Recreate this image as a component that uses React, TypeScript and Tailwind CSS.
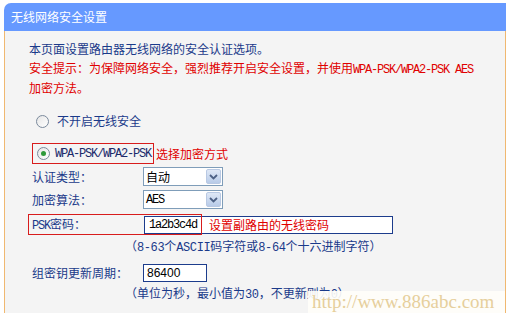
const cjk = "font-['Noto_Sans_CJK_SC','Noto_Sans',sans-serif]";
const mono = "font-['Liberation_Mono',monospace] tracking-[-1.2px]";
const hintMono = "font-['Liberation_Mono',monospace] tracking-[-0.4px]";

function Radio({ checked }: { checked?: boolean }) {
  return (
    <span className="flex h-[13px] w-[13px] items-center justify-center rounded-full border border-[#7b8a9c] bg-gradient-to-br from-[#e6e6e6] to-white">
      {checked && <span className="h-[5px] w-[5px] rounded-full bg-[#2f9a3a]" />}
    </span>
  );
}

function Select({ value, latin }: { value: string; latin?: boolean }) {
  return (
    <div className="flex h-[19px] w-[80px] items-stretch border border-[#7f9db9] bg-white">
      <span className={`flex flex-1 items-center pl-[2px] text-[12px] text-black ${latin ? mono : ""}`}>
        {value}
      </span>
      <span className="m-[1px] flex w-[15px] items-center justify-center rounded-[2px] border border-[#b9c9e3] bg-gradient-to-b from-[#dfe8f6] to-[#b8cbe8]">
        <svg width="9" height="6" viewBox="0 0 9 6">
          <path d="M1 1 L4.5 4.5 L8 1" fill="none" stroke="#4d6185" strokeWidth="1.8" />
        </svg>
      </span>
    </div>
  );
}

export default function App() {
  return (
    <div className={`relative h-[313px] w-[509px] overflow-hidden bg-white ${cjk}`}>
      <div className="ml-[4px] mt-[3px] w-[502px]">
        <div className="flex h-[28px] items-center rounded-tl-[7px] bg-[#6699ff] pl-[7px] text-[12px] text-white">
          无线网络安全设置
        </div>
        <div className="h-[283px] border-x border-[#f0b870] bg-[#f4f4f4] pt-[8px] text-[12px] text-[#1a3a8a]">
          <div className="pl-[24px] leading-[20px]">本页面设置路由器无线网络的安全认证选项。</div>
          <div className="pl-[24px] leading-[18px] text-[#e00000]">
            安全提示：为保障网络安全，强烈推荐开启安全设置，并使用
            <span className={mono}>WPA-PSK/WPA2-PSK AES</span>
          </div>
          <div className="pl-[24px] leading-[18px] text-[#e00000]">加密方法。</div>

          <div className="mt-[14px] flex h-[20px] items-center gap-[8px] pl-[31px]">
            <Radio />
            <span>不开启无线安全</span>
          </div>

          <div className="mt-[12px] flex h-[21px] items-center pl-[27px]">
            <div className="flex h-[21px] items-center gap-[5px] border border-[#d81c1c] pl-[4px] pr-[2px]">
              <Radio checked />
              <span className={`${mono} text-[#1a2a6a]`}>WPA-PSK/WPA2-PSK</span>
            </div>
            <span className="ml-[2px] text-[#e00000]">选择加密方式</span>
          </div>

          <div className="mt-[3px] flex h-[19px] items-center">
            <span className="w-[138px] pl-[27px]">认证类型：</span>
            <Select value="自动" />
          </div>
          <div className="mt-[4px] flex h-[19px] items-center">
            <span className="w-[138px] pl-[27px]">加密算法：</span>
            <Select value="AES" latin />
          </div>

          <div className="relative mt-[5px] flex h-[21px] items-center">
            <span className="w-[139px] pl-[27px]">
              <span className={mono}>PSK</span>密码：
            </span>
            <div className="flex h-[18px] w-[249px] items-center border border-[#1c3c8c] bg-white pl-[4px]">
              <span className={`${mono} text-black`}>1a2b3c4d</span>
              <span className="ml-[12px] text-[#e00000]">设置副路由的无线密码</span>
            </div>
            <div className="absolute left-[23px] top-0 h-[21px] w-[174px] border border-[#d81c1c]" />
          </div>

          <div className="mt-[1px] pl-[120px] leading-[20px]">
            （<span className={hintMono}>8-63</span>个<span className={hintMono}>ASCII</span>码字符或
            <span className={hintMono}>8-64</span>个十六进制字符）
          </div>

          <div className="mt-[6px] flex h-[18px] items-center">
            <span className="w-[138px] pl-[27px]">组密钥更新周期：</span>
            <div className="flex h-[18px] w-[64px] items-center border border-[#1c3c8c] bg-white pl-[3px] font-['Liberation_Sans',sans-serif] text-black">
              86400
            </div>
          </div>

          <div className="mt-[1px] pl-[120px] leading-[20px]">
            （单位为秒，最小值为<span className={hintMono}>30</span>，不更新则为<span className={hintMono}>0</span>）
          </div>
        </div>
      </div>
      <div className="absolute bottom-0 right-[4px] h-[22px] w-[197px] bg-[#fffef9]/90 pl-[4px] font-['Liberation_Serif',serif] text-[19px] leading-[22px] text-[#e6cf9c]">
        http://www.886abc.com
      </div>
    </div>
  );
}
